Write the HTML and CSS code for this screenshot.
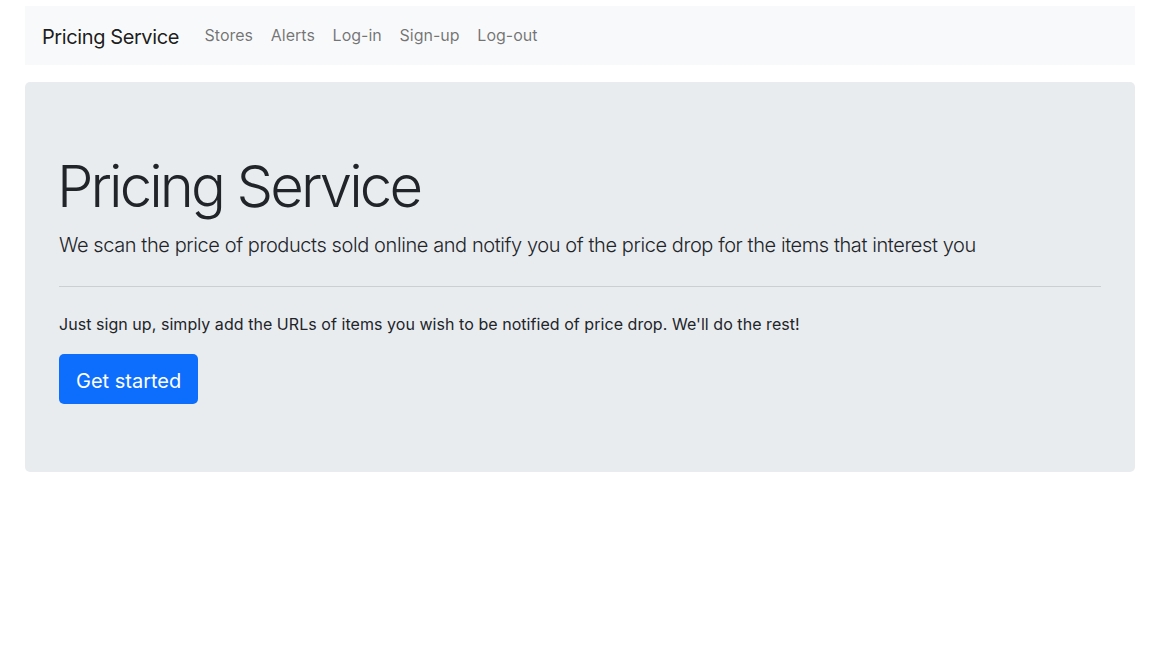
FILE: index.html
```html
<!DOCTYPE html>
<html lang="en">
<head>
<meta charset="utf-8">
<title>Pricing Service</title>
<link rel="stylesheet" href="styles.css">
</head>
<body>
<div class="container">
  <nav class="navbar">
    <a class="brand" href="#">Pricing Service</a>
    <ul class="nav">
      <li><a href="#">Stores</a></li>
      <li><a href="#">Alerts</a></li>
      <li><a href="#">Log-in</a></li>
      <li><a href="#">Sign-up</a></li>
      <li><a href="#">Log-out</a></li>
    </ul>
  </nav>
  <section class="jumbotron">
    <h1 class="display">Pricing Service</h1>
    <p class="lead">We scan the price of products sold online and notify you of the price drop for the items that interest you</p>
    <hr class="divider">
    <p class="text">Just sign up, simply add the URLs of items you wish to be notified of price drop. We'll do the rest!</p>
    <a class="btn" href="#">Get started</a>
  </section>
</div>
</body>
</html>
```

FILE: styles.css
```css
* { box-sizing: border-box; }
html, body { margin: 0; padding: 0; background: #fff; }
body {
  font-family: Inter, "Noto Sans", sans-serif;
  color: #212529;
  font-size: 16px;
  line-height: 1.5;
}
a { text-decoration: none; }
.container {
  width: 1110px;
  margin: 6px 0 0 25px;
}
.navbar {
  display: flex;
  align-items: center;
  height: 59px;
  padding: 0 17px;
  background: #f8f9fa;
}
.brand {
  font-size: 20px;
  color: rgba(0,0,0,.9);
  margin-right: 16.7px;
  line-height: 30px;
  padding-top: 2px;
  letter-spacing: -0.4px;
}
.nav {
  display: flex;
  list-style: none;
  margin: 0;
  padding: 0 0 2px;
}
.nav a {
  display: block;
  padding: 8px 8.9px;
  font-size: 16px;
  color: rgba(0,0,0,.55);
}
.jumbotron {
  margin-top: 17px;
  height: 390px;
  background: #e9ecef;
  border-radius: 5px;
  padding: 68px 34px 68px 34px;
}
.display {
  margin: 0 0 8px -2px;
  font-size: 58px;
  font-weight: 300;
  line-height: 72px;
  letter-spacing: -2.9px;
}
.lead {
  margin: 0;
  font-size: 20px;
  font-weight: 300;
  line-height: 30px;
  letter-spacing: -0.41px;
}
.divider {
  margin: 26px 0 0;
  border: 0;
  border-top: 1px solid rgba(0,0,0,.12);
  height: 0;
}
.text {
  margin: 25px 0 18px;
  font-size: 16px;
  line-height: 24px;
  letter-spacing: 0.05px;
}
.btn {
  display: inline-block;
  height: 50px;
  padding: 4px 17px 0;
  line-height: 46px;
  font-size: 20px;
  color: #fff;
  background: #0d6efd;
  border-radius: 5px;
}
```
